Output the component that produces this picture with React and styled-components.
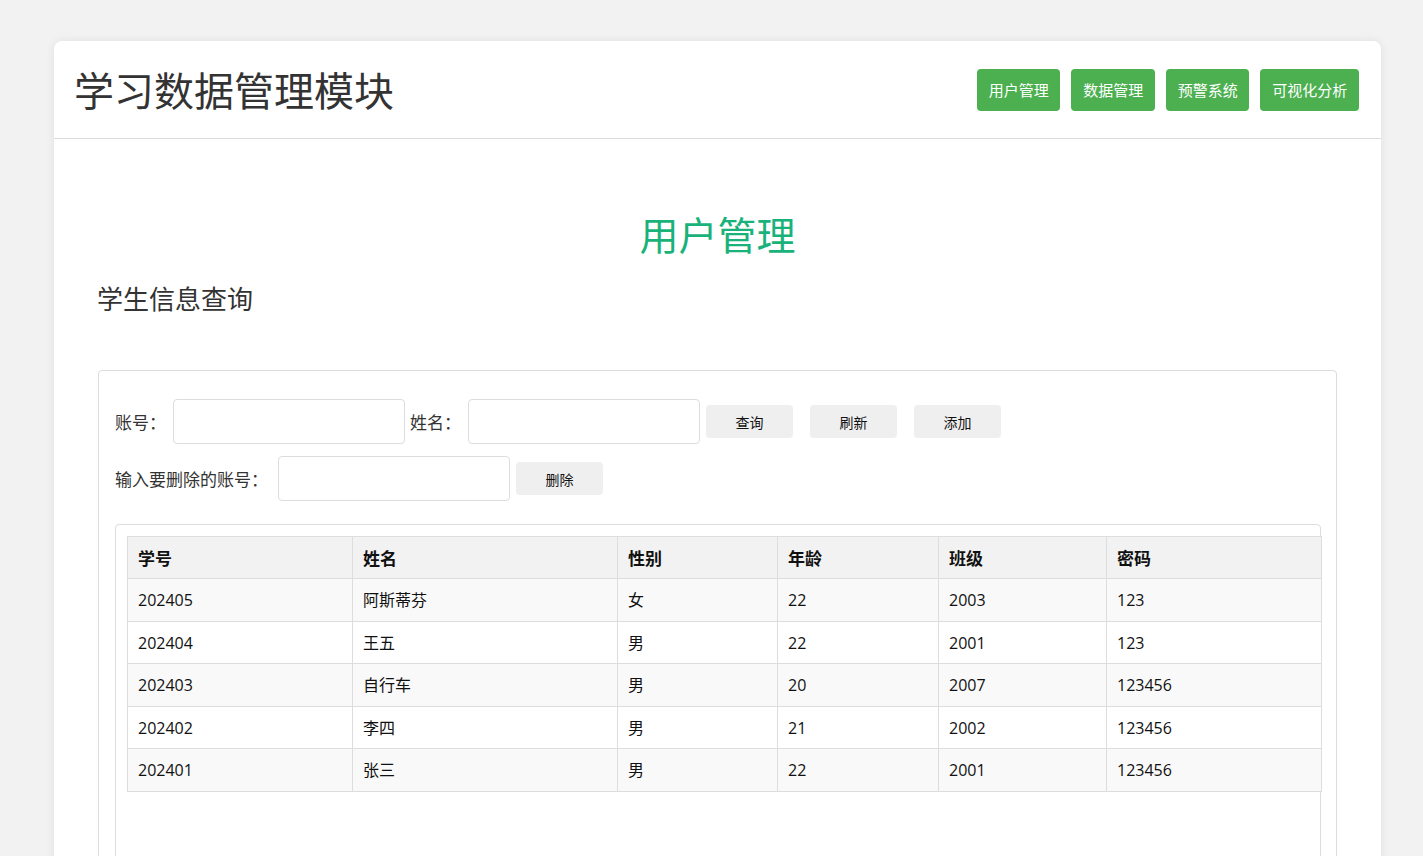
import React from "react";
import styled, { createGlobalStyle } from "styled-components";

const GlobalStyle = createGlobalStyle`
  html, body { margin: 0; padding: 0; }
  body {
    background: #f2f2f2;
    font-family: "Open Sans", "Noto Sans CJK SC", sans-serif;
    color: #333;
    overflow: hidden;
  }
`;

const Page = styled.div`
  padding: 41px 42px 0 54px;
`;

const Card = styled.div`
  background: #fff;
  border-radius: 8px;
  box-shadow: 0 0 10px rgba(0, 0, 0, 0.08);
  min-height: 900px;
`;

const Header = styled.header`
  display: flex;
  align-items: center;
  justify-content: space-between;
  height: 97px;
  padding: 0 22px;
  border-bottom: 1px solid #ddd;
`;

const Title = styled.h1`
  margin: -2px 0 0 -2px;
  font-family: "Noto Sans CJK SC", sans-serif;
  font-size: 40px;
  font-weight: 400;
  line-height: 48px;
  color: #333;
`;

const Nav = styled.nav`
  display: flex;
  gap: 11px;
`;

const NavButton = styled.button`
  background: #4caf50;
  color: #fff;
  border: none;
  border-radius: 4px;
  padding: 12px 11.75px;
  font-family: "Noto Sans CJK SC", sans-serif;
  font-size: 15px;
  line-height: 18px;
  cursor: pointer;
`;

const Main = styled.main`
  padding: 0 44px;
`;

const PageHeading = styled.h2`
  margin: 71px 0 0;
  text-align: center;
  font-family: "Noto Sans CJK SC", sans-serif;
  font-size: 39px;
  font-weight: 400;
  line-height: 46px;
  color: #19b27a;
`;

const SectionHeading = styled.h3`
  margin: 26px 0 0 -1px;
  font-family: "Noto Sans CJK SC", sans-serif;
  font-size: 26px;
  font-weight: 400;
  line-height: 32px;
  color: #333;
`;

const Panel = styled.section`
  margin-top: 56px;
  border: 1px solid #ddd;
  border-radius: 4px;
  padding: 28px 15px 0 16px;
  min-height: 520px;
`;

const FormRow = styled.div`
  display: flex;
  align-items: center;
  margin-top: ${(p) => p.$mt || 0}px;
`;

const Label = styled.label`
  font-family: "Noto Sans CJK SC", sans-serif;
  font-size: 17px;
  line-height: 24px;
  color: #333;
  margin-left: ${(p) => p.$ml || 0}px;
  margin-right: ${(p) => p.$mr || 7}px;
  white-space: nowrap;
`;

const Input = styled.input`
  box-sizing: border-box;
  width: 232px;
  height: 45px;
  border: 1px solid #ddd;
  border-radius: 4px;
  padding: 0 10px;
  font-size: 16px;
  outline: none;
`;

const ActionButton = styled.button`
  box-sizing: border-box;
  width: 87px;
  height: 33px;
  margin-left: ${(p) => p.$ml || 0}px;
  background: #efefef;
  border: none;
  border-radius: 4px;
  font-family: "Noto Sans CJK SC", sans-serif;
  font-size: 14px;
  color: #111;
  cursor: pointer;
`;

const TableBox = styled.div`
  margin-top: 23px;
  border: 1px solid #ddd;
  border-radius: 4px;
  padding: 11px 0 0 11px;
  min-height: 400px;
`;

const Table = styled.table`
  width: 100%;
  border-collapse: collapse;
  table-layout: fixed;
`;

const Th = styled.th`
  text-align: left;
  font-family: "Noto Sans CJK SC", sans-serif;
  font-size: 17px;
  font-weight: 700;
  color: #111;
  background: #f2f2f2;
  border: 1px solid #ddd;
  padding: 9px 10px;
  line-height: 23px;
`;

const Tr = styled.tr`
  background: ${(p) => (p.$odd ? "#f9f9f9" : "#fff")};
`;

const Td = styled.td`
  font-size: 16px;
  color: #111;
  border: 1px solid #ddd;
  padding: 10px 10px 8px;
  line-height: 23.6px;
`;

const columns = [
  { key: "id", label: "学号", width: 225 },
  { key: "name", label: "姓名", width: 265 },
  { key: "gender", label: "性别", width: 160 },
  { key: "age", label: "年龄", width: 161 },
  { key: "cls", label: "班级", width: 168 },
  { key: "pwd", label: "密码", width: 215 },
];

const rows = [
  { id: "202405", name: "阿斯蒂芬", gender: "女", age: "22", cls: "2003", pwd: "123" },
  { id: "202404", name: "王五", gender: "男", age: "22", cls: "2001", pwd: "123" },
  { id: "202403", name: "自行车", gender: "男", age: "20", cls: "2007", pwd: "123456" },
  { id: "202402", name: "李四", gender: "男", age: "21", cls: "2002", pwd: "123456" },
  { id: "202401", name: "张三", gender: "男", age: "22", cls: "2001", pwd: "123456" },
];

export default function App() {
  return (
    <>
      <GlobalStyle />
      <Page>
        <Card>
          <Header>
            <Title>学习数据管理模块</Title>
            <Nav>
              <NavButton>用户管理</NavButton>
              <NavButton>数据管理</NavButton>
              <NavButton>预警系统</NavButton>
              <NavButton>可视化分析</NavButton>
            </Nav>
          </Header>
          <Main>
            <PageHeading>用户管理</PageHeading>
            <SectionHeading>学生信息查询</SectionHeading>
            <Panel>
              <FormRow>
                <Label>账号：</Label>
                <Input />
                <Label $ml={5}>姓名：</Label>
                <Input />
                <ActionButton $ml={6}>查询</ActionButton>
                <ActionButton $ml={17}>刷新</ActionButton>
                <ActionButton $ml={17}>添加</ActionButton>
              </FormRow>
              <FormRow $mt={12}>
                <Label $mr={10}>输入要删除的账号：</Label>
                <Input />
                <ActionButton $ml={6}>删除</ActionButton>
              </FormRow>
              <TableBox>
                <Table>
                  <colgroup>
                    {columns.map((c) => (
                      <col key={c.key} style={{ width: c.width }} />
                    ))}
                  </colgroup>
                  <thead>
                    <tr>
                      {columns.map((c) => (
                        <Th key={c.key}>{c.label}</Th>
                      ))}
                    </tr>
                  </thead>
                  <tbody>
                    {rows.map((r, i) => (
                      <Tr key={r.id} $odd={i % 2 === 0}>
                        {columns.map((c) => (
                          <Td key={c.key}>{r[c.key]}</Td>
                        ))}
                      </Tr>
                    ))}
                  </tbody>
                </Table>
              </TableBox>
            </Panel>
          </Main>
        </Card>
      </Page>
    </>
  );
}
